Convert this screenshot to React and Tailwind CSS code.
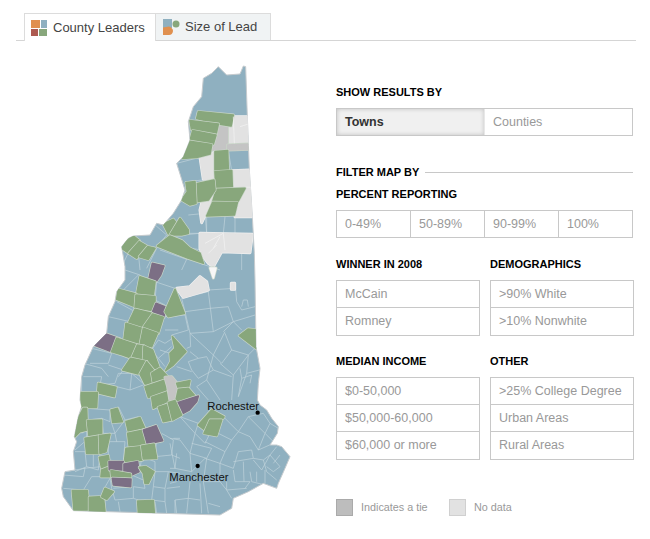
import React from "react";

const BLUE = "#8fb0c0";
const GREEN = "#88a77c";
const PURPLE = "#7c6f85";
const GRAY = "#c4c4c4";
const LIGHT = "#e2e2e2";
const LINE = "#c3d4dc";

const outline =
  "730,198 737,200 742,350 748,510 757,650 763,760 765,840 768,1040 780,1105 775,1150 772,1200 780,1215 800,1230 815,1255 835,1280 832,1300 810,1335 830,1335 845,1340 870,1370 855,1405 835,1450 830,1465 790,1450 745,1475 700,1495 695,1525 660,1545 220,1532 190,1490 185,1465 195,1415 225,1410 220,1355 230,1325 223,1310 235,1250 245,1220 240,1200 245,1130 255,1095 280,1040 320,1000 325,950 345,905 350,875 375,840 375,800 365,740 385,715 400,708 450,705 470,670 490,675 520,640 545,600 555,570 530,490 550,470 570,420 565,365 580,320 605,290 610,235 635,220 655,200 680,225 720,222";

// north half, in reference px x3
const northShapes = [
  [LIGHT, "700,350 742,350 748,435 683,435 680,380 695,378"],
  [GRAY, "655,375 682,380 682,450 637,450"],
  [GRAY, "683,435 748,432 748,448 683,450"],
  [LIGHT, "600,472 635,462 640,458 645,535 610,538"],
  [LIGHT, "697,512 750,510 755,565 697,565"],
  [LIGHT, "735,565 755,565 757,650 705,650"],
  [LIGHT, "610,590 637,590 618,640 605,668 600,630"],
  [LIGHT, "600,700 757,703 750,758 665,755 640,800 625,790 610,770 600,745"],
  [GREEN, "595,335 700,345 693,378 655,372 590,355"],
  [GREEN, "570,362 655,372 648,403 575,390"],
  [GREEN, "578,392 648,405 640,432 570,422"],
  [GREEN, "570,424 635,434 630,462 590,472 548,475"],
  [GREEN, "645,455 683,452 685,512 645,512"],
  [GREEN, "645,515 695,512 697,565 648,565"],
  [GREEN, "650,568 735,565 712,608 638,605"],
  [GREEN, "638,607 712,608 703,645 620,648"],
  [GREEN, "585,552 642,540 645,570 625,600 590,605"],
  [GREEN, "558,548 585,545 588,610 570,615 545,600 562,575"],
  [GREEN, "490,672 520,658 538,680 507,705"],
  [GREEN, "540,655 565,690 565,700 545,705 510,705"],
  [GREEN, "510,708 545,722 570,745 600,760 610,790 565,775 472,738"],
  [GREEN, "375,725 400,708 418,722 387,760 365,745"],
  [GREEN, "418,725 440,738 410,775 387,760"],
  [GREEN, "443,740 465,745 445,778 418,770"],
];

// south half, y counted from 270px
const southShapes = [
  [LIGHT, "600,20 620,35 625,60 590,70 550,82 530,55 570,50"],
  [LIGHT, "694,40 704,40 704,58 694,58"],
  ["#f6f6f6", "630,-6 648,-6 640,24"],
  [PURPLE, "457,-20 492,-12 482,15 470,32 447,25"],
  [GREEN, "420,20 465,35 460,75 410,72"],
  [GREEN, "355,58 408,72 405,110 350,88"],
  [GREEN, "408,75 465,80 465,122 405,115"],
  [PURPLE, "468,100 495,110 492,142 458,125"],
  [GREEN, "525,58 553,130 505,140 495,125"],
  [GREEN, "405,118 455,130 428,170 385,160"],
  [GREEN, "458,132 490,142 475,190 430,172"],
  [GREEN, "378,160 425,175 418,225 372,208"],
  [GREEN, "430,175 472,190 455,230 420,225"],
  [PURPLE, "318,192 360,207 335,245 282,225"],
  [GREEN, "350,205 412,225 395,265 368,255 335,245"],
  [GREEN, "412,225 432,228 428,270 395,265"],
  [GREEN, "432,228 458,240 480,300 450,290 430,270"],
  [GREEN, "392,265 440,275 415,312 368,300"],
  [GREEN, "440,275 460,300 455,345 435,342 420,312"],
  [GREEN, "455,310 480,295 503,320 460,340"],
  [GREEN, "517,200 540,225 558,245 520,285 497,302 512,275 510,250 525,235"],
  [GREEN, "745,177 770,180 768,235 718,197"],
  [GREEN, "435,350 495,330 503,365 445,382"],
  [GREEN, "455,382 503,365 510,390 460,415"],
  [GRAY, "495,322 515,320 535,345 528,385 510,392 503,350"],
  [GREEN, "530,340 570,332 565,355 535,355"],
  [GREEN, "535,358 565,355 585,378 527,395"],
  [PURPLE, "527,400 595,378 590,395 568,420 540,435"],
  [GREEN, "475,412 503,403 515,450 490,455"],
  [GREEN, "505,398 525,392 545,435 518,450"],
  [GREEN, "295,340 348,352 343,380 293,368"],
  [GREEN, "242,368 292,368 290,412 245,412"],
  [GREEN, "333,420 352,415 367,455 338,457"],
  [GREEN, "250,415 260,415 262,480 240,485 225,500 232,450"],
  [GREEN, "262,452 305,450 305,497 267,498"],
  [GREEN, "378,455 420,443 433,472 385,485"],
  [GREEN, "383,490 430,480 440,520 388,533"],
  [GREEN, "255,505 295,498 298,550 260,550"],
  [GREEN, "298,497 330,493 318,545 300,550"],
  [PURPLE, "430,480 468,467 488,512 442,522"],
  [GREEN, "378,535 425,530 428,570 373,578"],
  [GREEN, "425,528 462,522 470,565 430,567"],
  [GREEN, "298,562 325,557 330,590 305,595"],
  [GREEN, "305,600 330,590 333,620 303,620"],
  [PURPLE, "327,575 370,575 370,600 328,600"],
  [PURPLE, "372,582 413,575 417,605 395,615 372,605"],
  [GREEN, "333,602 392,612 392,622 335,622"],
  [PURPLE, "337,625 393,627 392,650 340,645"],
  [GREEN, "418,592 438,590 462,605 445,640 435,640 430,610"],
  [GREEN, "635,420 672,440 665,450 630,448 612,478 595,465"],
  [GREEN, "630,450 665,450 650,497 612,490"],
  [GREEN, "217,662 262,662 267,720 222,720"],
  [GREEN, "268,682 310,680 315,725 268,723"],
  [GREEN, "315,655 340,665 320,688 305,680"],
  [GREEN, "413,693 460,692 463,730 415,728"],
];

// town borders, each set measured from its own corner of the map
const townSets = [
  {
    dx: 0,
    dy: 0,
    lines: [
      "470,745 440,805",
      "480,750 560,778 545,810",
      "600,790 660,810",
      "655,757 725,757 725,810",
      "685,452 695,512",
      "620,650 620,700 670,700 675,650",
      "705,650 705,700",
      "565,645 615,640 620,700 565,700",
      "545,705 600,700 605,750 545,740",
      "530,490 600,472 608,540 555,545",
      "462,672 500,705 470,740",
      "415,760 420,810",
      "385,758 370,790",
    ],
  },
  {
    dx: 510,
    dy: 840,
    lines: [
      "35,55 115,35 130,155 60,160 45,95 35,55",
      "45,95 120,85",
      "120,85 175,80 190,125 130,155",
      "115,30 195,25",
      "195,5 200,65 215,90 255,80",
      "215,80 220,60 232,60 235,80",
      "190,125 255,105",
      "160,155 190,125",
      "60,160 130,225 165,155",
      "165,160 185,210 155,250 130,225",
      "185,210 235,225 190,285 150,250",
      "235,225 255,205",
      "235,225 230,280 205,350",
      "190,285 185,360",
      "210,265 215,295 205,350",
      "215,295 245,285 240,310",
      "230,280 268,270",
      "130,225 110,300 80,320",
      "60,215 85,235 55,245 65,270 85,295 130,270 110,230 85,235",
      "20,260 65,275",
      "50,300 60,325",
      "80,320 115,360",
      "110,300 150,360",
      "60,160 62,200 50,205",
      "0,110 45,105 55,150 5,165 10,175",
      "130,270 185,290",
      "190,125 215,150",
    ],
  },
  {
    dx: 510,
    dy: 1200,
    lines: [
      "0,115 30,120 60,160 75,100 30,50",
      "0,50 30,50 85,70 75,100",
      "75,100 105,130 125,90 85,70",
      "105,125 165,155 185,120 125,90",
      "160,50 205,95 185,120",
      "205,95 235,50 285,100 265,150 240,110 205,95",
      "235,50 280,40 300,70 285,100",
      "300,70 325,85",
      "320,135 285,100",
      "265,150 310,130",
      "60,160 110,175 125,145 65,130",
      "105,175 150,190 165,155",
      "150,190 190,205 205,155 245,150 250,175 190,185",
      "250,175 280,180 300,165 275,210 250,180",
      "280,180 290,215 320,240",
      "300,165 330,200 310,215 290,200",
      "330,165 310,190",
      "20,160 15,205 65,215 60,160",
      "15,205 0,205",
      "65,215 105,175",
      "110,175 100,245 150,245 150,190",
      "150,245 170,270 185,295",
      "100,245 115,340",
      "60,245 50,340",
      "90,250 95,340",
      "15,300 55,295 90,300",
      "115,310 150,320",
      "170,245 170,270 230,265",
      "190,210 195,245 240,245 225,265",
      "220,185 222,245",
      "240,215 245,245 285,255 265,265",
      "260,215 260,245",
      "285,210 285,250",
      "0,250 20,245",
      "15,300 20,340",
      "0,130 15,205",
      "160,50 125,90",
      "300,165 320,140",
    ],
  },
  {
    dx: 165,
    dy: 1200,
    lines: [
      "95,25 165,30 165,65 140,55 95,60 95,25",
      "140,55 145,100 180,100 170,70",
      "190,20 210,60 180,100 185,125",
      "250,50 210,60",
      "80,100 95,90 95,120",
      "60,155 90,155 95,200 60,215",
      "95,160 135,160 130,210 95,200",
      "115,160 115,200",
      "30,215 90,205 85,230 25,225",
      "85,205 140,200 140,230 110,230 85,270 25,265",
      "85,270 100,275",
      "145,270 165,235 170,265 180,300",
      "160,125 210,125 205,185 160,180 160,125",
      "180,232 170,235",
      "180,300 235,295 235,260 270,265 265,240 230,225 225,260 175,265",
      "235,295 250,300",
      "260,175 255,205 300,215 300,185 260,170",
      "300,215 295,260 330,265 340,215 300,215",
      "295,260 290,300 330,305 330,265",
      "305,120 300,170 350,165 355,120 320,100",
      "355,115 375,115",
      "350,165 375,175",
      "190,305 195,335",
      "150,295 148,335",
      "300,305 305,340",
      "330,305 335,340",
      "360,300 360,340",
      "335,265 375,260",
      "340,215 375,220",
      "60,60 80,95",
      "60,150 95,120",
      "95,160 90,120",
    ],
  },
  {
    dx: 225,
    dy: 810,
    lines: [
      "125,95 180,125",
      "100,140 165,155",
      "90,190 135,205",
      "50,235 110,250 100,280 45,280",
      "100,285 145,300 130,320",
      "25,280 80,295 100,320",
      "25,320 80,320 75,345 120,340 130,310",
      "20,325 20,365 70,365",
      "130,310 170,310 165,360 125,350",
      "170,310 210,345",
      "165,360 205,345",
      "230,240 250,210 270,220 300,200",
      "230,240 250,265 290,230",
      "250,265 270,290",
      "255,240 285,250",
      "245,205 240,185 265,145",
      "270,140 310,135",
      "270,180 310,180",
      "240,35 300,55 290,105",
      "245,35 240,90 270,105",
      "150,0 195,15 200,20",
      "145,60 190,15",
    ],
  },
];

const lightLines = [
  "615,730 670,700 675,750",
  "700,350 703,430",
  "720,380 745,372",
  "640,745 660,710",
  "625,760 650,735",
];

const cellText = "text-[12.5px] text-[#999] pl-[8px] flex items-center";
const labelText = "text-[11px] font-bold text-black leading-none";

function Towns({ shapes }) {
  return shapes.map(([c, p], i) => (
    <g key={i} strokeLinejoin="round">
      {/* border ring first, then the town a bit smaller on top of it */}
      <polygon points={p} fill="none" stroke={c === LIGHT ? "#f0f0f0" : "#c9d6c8"} strokeWidth="9" />
      <polygon points={p} fill={c} stroke={c} strokeWidth="5" />
    </g>
  ));
}

function MapSvg() {
  return (
    <svg viewBox="0 150 1008 1440" className="w-[336px] h-[480px] block shrink-0">
      <defs>
        <clipPath id="state">
          <polygon points={outline} />
        </clipPath>
      </defs>
      <polygon points={outline} fill={BLUE} stroke="#c6cbce" strokeWidth="3" />
      <g clipPath="url(#state)">
        {townSets.map((set, i) => (
          <g key={i} transform={`translate(${set.dx} ${set.dy})`}>
            {set.lines.map((p, j) => (
              <polyline key={j} points={p} fill="none" stroke={LINE} strokeWidth="2" />
            ))}
          </g>
        ))}
        <Towns shapes={northShapes} />
        {lightLines.map((p, i) => (
          <polyline key={i} points={p} fill="none" stroke="#f4f4f4" strokeWidth="2" />
        ))}
        <g transform="translate(0 810)">
          <Towns shapes={southShapes} />
        </g>
      </g>
      <g transform="translate(0 810)">
        <circle cx="773" cy="428" r="6.5" fill="#000" />
        <circle cx="593" cy="588" r="6.5" fill="#000" />
        <text x="622" y="419" fontSize="34" fill="#111" className="font-['Liberation_Sans',sans-serif]">Rochester</text>
        <text x="508" y="632" fontSize="34" fill="#111" className="font-['Liberation_Sans',sans-serif]">Manchester</text>
      </g>
    </svg>
  );
}

function CountyIcon() {
  return (
    <svg width="16" height="16" viewBox="0 0 16 16" className="shrink-0">
      <rect x="0" y="0" width="9" height="8" fill="#e0904f" />
      <rect x="10" y="0" width="6" height="8" fill="#8fb0c0" />
      <rect x="0" y="9" width="7" height="7" fill="#ad5a50" />
      <rect x="8" y="9" width="8" height="7" fill="#88a77c" />
    </svg>
  );
}

function LeadIcon() {
  return (
    <svg width="17" height="16" viewBox="0 0 17 16" className="shrink-0">
      <rect x="0" y="0" width="9" height="9" fill="#8fb0c0" />
      <circle cx="13" cy="5" r="3.5" fill="#88a77c" />
      <path d="M0 8.5 L6 7.5 Q10 9 10 12 Q9.5 16 6 16 L0 16 Z" fill="#e0904f" />
    </svg>
  );
}

function FilterBox({ items }) {
  return (
    <div className="border border-[#c8c8c8] w-[144px] divide-y divide-[#c8c8c8]">
      {items.map((t) => (
        <div key={t} className={`${cellText} h-[27px]`}>{t}</div>
      ))}
    </div>
  );
}

function FilterGroup({ title, items }) {
  return (
    <div className="w-[144px]">
      <div className={`${labelText} mb-[10px]`}>{title}</div>
      <FilterBox items={items} />
    </div>
  );
}

export default function App() {
  return (
    <div className="w-[650px] h-[539px] bg-white overflow-hidden pt-[13px] font-['Liberation_Sans',Arial,sans-serif]">
      {/* Tabs */}
      <div className="mx-[16px] w-[620px] h-[28px] border-b border-[#d5d5d5] pl-[8px] flex">
        <div className="w-[132px] h-[28px] bg-white border border-b-0 border-[#dcdcdc] flex items-center gap-[6px] pl-[6px] text-[13px] text-[#444]">
          <CountyIcon />
          <span>County Leaders</span>
        </div>
        <div className="w-[115px] h-[27px] bg-[#f0f3f4] border border-l-0 border-b-0 border-[#dcdcdc] flex items-center gap-[5px] pl-[7px] text-[13px] text-[#444]">
          <LeadIcon />
          <span>Size of Lead</span>
        </div>
      </div>

      <div className="flex mt-[9px]">
        <MapSvg />

        {/* Filters */}
        <div className="w-[298px] pt-[37px]">
          <div className={`${labelText} mb-[10px]`}>SHOW RESULTS BY</div>
          <div className="flex w-[297px] h-[28px] border border-[#c8c8c8]">
            <div className="w-[148px] bg-[#f0f0f0] shadow-[inset_0_0_4px_rgba(0,0,0,0.2)] border-r border-[#e8e8e8] text-[12.5px] font-bold text-[#333] pl-[8px] flex items-center">Towns</div>
            <div className={`${cellText} flex-1`}>Counties</div>
          </div>

          <div className="flex items-center gap-[6px] w-[297px] mt-[31px]">
            <span className={labelText}>FILTER MAP BY</span>
            <div className="flex-1 h-px bg-[#c8c8c8]" />
          </div>
          <div className={`${labelText} mt-[11px] mb-[10px]`}>PERCENT REPORTING</div>
          <div className="grid grid-cols-[74px_74px_74px_73px] w-[297px] h-[28px] border border-[#c8c8c8] divide-x divide-[#c8c8c8]">
            {["0-49%", "50-89%", "90-99%", "100%"].map((t) => (
              <div key={t} className={cellText}>{t}</div>
            ))}
          </div>

          <div className="flex gap-[10px] mt-[21px]">
            <FilterGroup title="WINNER IN 2008" items={["McCain", "Romney"]} />
            <FilterGroup title="DEMOGRAPHICS" items={[">90% White", ">10% Nonwhite"]} />
          </div>

          <div className="flex gap-[10px] mt-[20px]">
            <FilterGroup title="MEDIAN INCOME" items={["$0-50,000", "$50,000-60,000", "$60,000 or more"]} />
            <FilterGroup title="OTHER" items={[">25% College Degree", "Urban Areas", "Rural Areas"]} />
          </div>

          <div className="flex items-center mt-[39px] text-[10.8px] text-[#999]">
            <div className="w-[17px] h-[17px] bg-[#bdbdbd] border border-[#aaa]" />
            <span className="ml-[8px] w-[80px]">Indicates a tie</span>
            <div className="ml-[8px] w-[17px] h-[17px] bg-[#e2e2e2] border border-[#d0d0d0]" />
            <span className="ml-[8px]">No data</span>
          </div>
        </div>
      </div>
    </div>
  );
}
